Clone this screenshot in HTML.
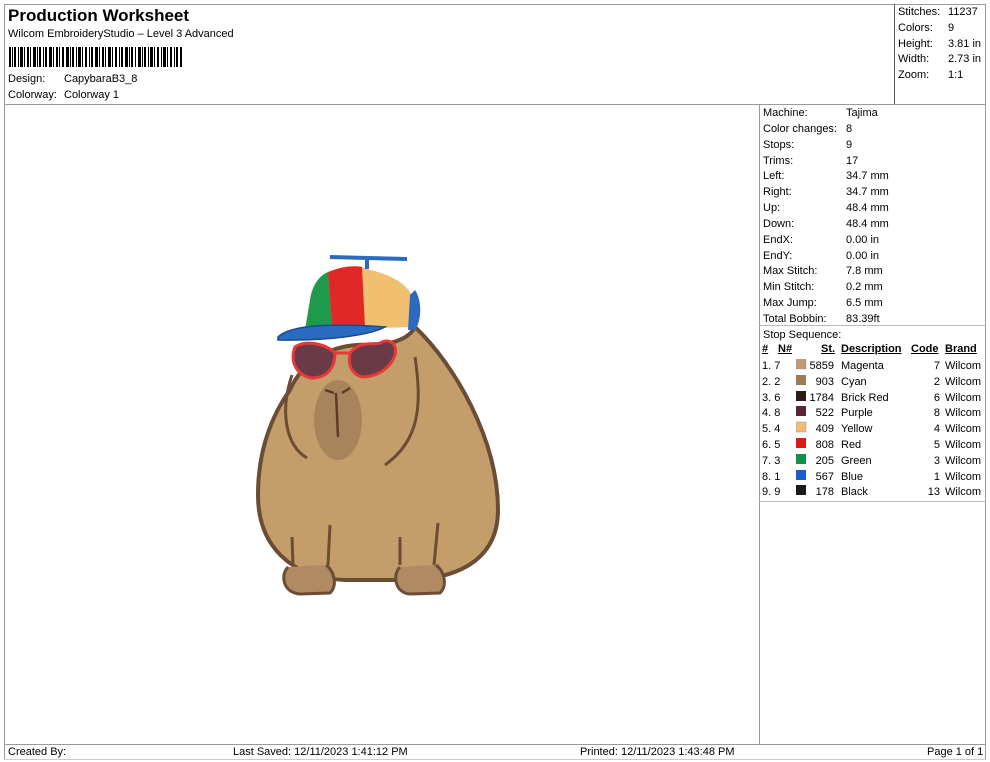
<!DOCTYPE html>
<html><head><meta charset="utf-8"><style>
body{margin:0;width:990px;height:762px;background:#fff;font-family:"Liberation Sans",Arial,sans-serif;font-size:11px;color:#000;position:relative;overflow:hidden}
.a{position:absolute;white-space:nowrap}
.l{position:absolute;background:#9a9a9a}
</style></head><body>
<div class="l" style="left:4px;top:4px;width:982px;height:1px"></div>
<div class="l" style="left:4px;top:4px;width:1px;height:756px"></div>
<div class="l" style="left:985px;top:4px;width:1px;height:756px"></div>
<div class="l" style="left:4px;top:104px;width:982px;height:1px"></div>
<div class="l" style="left:894px;top:4px;width:1px;height:100px;background:#555"></div>
<div class="l" style="left:759px;top:104px;width:1px;height:640px"></div>
<div class="l" style="left:759px;top:325px;width:227px;height:1px;background:#bbb"></div>
<div class="l" style="left:759px;top:501px;width:227px;height:1px;background:#bbb"></div>
<div class="l" style="left:4px;top:744px;width:982px;height:1px"></div>
<div class="l" style="left:4px;top:759px;width:982px;height:1px;background:#ccc"></div>

<div class="a" style="left:8px;top:6px;font-size:17px;font-weight:bold">Production Worksheet</div>
<div class="a" style="left:8px;top:28px">Wilcom EmbroideryStudio – Level 3 Advanced</div>
<svg class="a" style="left:9px;top:47px" width="174" height="20">
<g fill="#000">
<rect x="0" y="0" width="2" height="20"/><rect x="3" y="0" width="1" height="20"/><rect x="5" y="0" width="2" height="20"/><rect x="9" y="0" width="1" height="20"/><rect x="11" y="0" width="3" height="20"/><rect x="15" y="0" width="1" height="20"/><rect x="18" y="0" width="2" height="20"/><rect x="21" y="0" width="1" height="20"/><rect x="24" y="0" width="3" height="20"/><rect x="28" y="0" width="1" height="20"/><rect x="30" y="0" width="2" height="20"/><rect x="34" y="0" width="1" height="20"/><rect x="36" y="0" width="2" height="20"/><rect x="40" y="0" width="3" height="20"/><rect x="44" y="0" width="1" height="20"/><rect x="47" y="0" width="2" height="20"/><rect x="50" y="0" width="1" height="20"/><rect x="53" y="0" width="2" height="20"/><rect x="57" y="0" width="3" height="20"/><rect x="61" y="0" width="1" height="20"/><rect x="63" y="0" width="2" height="20"/><rect x="67" y="0" width="1" height="20"/><rect x="69" y="0" width="3" height="20"/><rect x="73" y="0" width="1" height="20"/><rect x="76" y="0" width="2" height="20"/><rect x="80" y="0" width="1" height="20"/><rect x="82" y="0" width="2" height="20"/><rect x="86" y="0" width="3" height="20"/><rect x="90" y="0" width="1" height="20"/><rect x="93" y="0" width="2" height="20"/><rect x="96" y="0" width="1" height="20"/><rect x="99" y="0" width="3" height="20"/><rect x="103" y="0" width="1" height="20"/><rect x="106" y="0" width="2" height="20"/><rect x="110" y="0" width="1" height="20"/><rect x="112" y="0" width="2" height="20"/><rect x="116" y="0" width="3" height="20"/><rect x="120" y="0" width="1" height="20"/><rect x="122" y="0" width="2" height="20"/><rect x="126" y="0" width="1" height="20"/><rect x="129" y="0" width="3" height="20"/><rect x="133" y="0" width="1" height="20"/><rect x="135" y="0" width="2" height="20"/><rect x="139" y="0" width="1" height="20"/><rect x="141" y="0" width="3" height="20"/><rect x="145" y="0" width="1" height="20"/><rect x="148" y="0" width="2" height="20"/><rect x="152" y="0" width="1" height="20"/><rect x="154" y="0" width="3" height="20"/><rect x="158" y="0" width="1" height="20"/><rect x="161" y="0" width="2" height="20"/><rect x="165" y="0" width="1" height="20"/><rect x="167" y="0" width="2" height="20"/><rect x="171" y="0" width="2" height="20"/>
</g></svg>
<div class="a" style="left:8px;top:73px">Design:</div><div class="a" style="left:64px;top:73px">CapybaraB3_8</div>
<div class="a" style="left:8px;top:89px">Colorway:</div><div class="a" style="left:64px;top:89px">Colorway 1</div>

<div class="a" style="left:898px;top:5px;line-height:15.8px">Stitches:<br>Colors:<br>Height:<br>Width:<br>Zoom:</div>
<div class="a" style="left:948px;top:5px;line-height:15.8px">11237<br>9<br>3.81 in<br>2.73 in<br>1:1</div>

<div class="a" style="left:763px;top:106px;line-height:15.85px">Machine:<br>Color changes:<br>Stops:<br>Trims:<br>Left:<br>Right:<br>Up:<br>Down:<br>EndX:<br>EndY:<br>Max Stitch:<br>Min Stitch:<br>Max Jump:<br>Total Bobbin:<br>Stop Sequence:</div>
<div class="a" style="left:846px;top:106px;line-height:15.85px">Tajima<br>8<br>9<br>17<br>34.7 mm<br>34.7 mm<br>48.4 mm<br>48.4 mm<br>0.00 in<br>0.00 in<br>7.8 mm<br>0.2 mm<br>6.5 mm<br>83.39ft</div>

<div class="a" style="left:762px;top:343px;font-weight:bold;text-decoration:underline">#</div>
<div class="a" style="left:778px;top:343px;font-weight:bold;text-decoration:underline">N#</div>
<div class="a" style="left:821px;top:343px;font-weight:bold;text-decoration:underline">St.</div>
<div class="a" style="left:841px;top:343px;font-weight:bold;text-decoration:underline">Description</div>
<div class="a" style="left:911px;top:343px;font-weight:bold;text-decoration:underline">Code</div>
<div class="a" style="left:945px;top:343px;font-weight:bold;text-decoration:underline">Brand</div>
<div class="a" style="left:762px;top:359px;line-height:15.8px">1. 7<br>2. 2<br>3. 6<br>4. 8<br>5. 4<br>6. 5<br>7. 3<br>8. 1<br>9. 9</div>
<div class="a" style="left:796px;top:359px;line-height:15.8px;width:38px;text-align:right">5859<br>903<br>1784<br>522<br>409<br>808<br>205<br>567<br>178</div>
<div class="a" style="left:841px;top:359px;line-height:15.8px">Magenta<br>Cyan<br>Brick Red<br>Purple<br>Yellow<br>Red<br>Green<br>Blue<br>Black</div>
<div class="a" style="left:910px;top:359px;line-height:15.8px;width:30px;text-align:right">7<br>2<br>6<br>8<br>4<br>5<br>3<br>1<br>13</div>
<div class="a" style="left:945px;top:359px;line-height:15.8px">Wilcom<br>Wilcom<br>Wilcom<br>Wilcom<br>Wilcom<br>Wilcom<br>Wilcom<br>Wilcom<br>Wilcom</div>
<svg class="a" style="left:796px;top:359px" width="12" height="140">
<rect x="0" y="0" width="10" height="10" fill="#c09a72" stroke="#999" stroke-width=".5"/>
<rect x="0" y="16" width="10" height="10" fill="#a07a58"/>
<rect x="0" y="32" width="10" height="10" fill="#2a1a1a"/>
<rect x="0" y="47" width="10" height="10" fill="#5a2438"/>
<rect x="0" y="63" width="10" height="10" fill="#f0bc78" stroke="#999" stroke-width=".5"/>
<rect x="0" y="79" width="10" height="10" fill="#e01818"/>
<rect x="0" y="95" width="10" height="10" fill="#10904a"/>
<rect x="0" y="111" width="10" height="10" fill="#1a5cc8"/>
<rect x="0" y="126" width="10" height="10" fill="#1a1a1a"/>
</svg>

<svg class="a" style="left:250px;top:245px" width="260" height="360" viewBox="0 0 260 360">
<path d="M40 145 C55 110 90 98 120 100 C145 100 160 92 165 82 C205 120 248 195 248 265 C248 310 215 333 160 335 L95 335 C40 333 8 300 8 250 C8 205 22 170 40 145 Z" fill="#c49e6a" stroke="#6b4c35" stroke-width="4"/>
<path d="M38 322 C30 330 33 348 50 349 L80 348 C88 340 84 326 76 320" fill="#b08a62" stroke="#6b4c35" stroke-width="3"/>
<path d="M150 322 C142 330 145 348 160 349 L190 348 C198 340 194 326 186 320" fill="#b08a62" stroke="#6b4c35" stroke-width="3"/>
<path d="M43 320 L42 292 M78 320 L80 280 M150 320 L150 292 M184 320 L188 278" stroke="#6b4c35" stroke-width="3" fill="none"/>
<path d="M42 130 C30 165 35 200 57 213 M165 112 C172 160 170 195 135 220" stroke="#6b4c35" stroke-width="3" fill="none"/>
<ellipse cx="88" cy="175" rx="24" ry="40" fill="#a8845c"/>
<path d="M86 148 L88 192 M75 145 L84 148 M92 148 L100 143" stroke="#5a3c28" stroke-width="2.5" fill="none"/>
<path d="M120 25 C95 15 70 25 60 55 L55 85 L165 82 C170 60 165 35 120 25Z" fill="#f0c070"/>
<path d="M60 55 C62 40 70 30 78 27 L82 82 L55 85 Z" fill="#1e9a4a"/>
<path d="M78 27 C90 22 105 20 112 22 L115 82 L82 82 Z" fill="#e02828"/>
<path d="M165 45 C172 55 172 75 165 85 L158 85 L160 50Z" fill="#2a6ac0"/>
<path d="M28 92 C40 80 80 78 135 82 C120 90 80 96 28 95Z" fill="#2a6ac0" stroke="#1a4a90" stroke-width="1.5"/>
<path d="M80 12 L157 14 M117 13 L117 24" stroke="#2a6ac0" stroke-width="4" fill="none"/>
<path d="M45 102 C55 95 75 98 85 108 C85 125 75 133 62 133 C45 130 40 115 45 102Z" fill="#6a3a48" stroke="#e83838" stroke-width="3"/>
<path d="M100 108 C110 95 125 100 130 98 C140 92 148 100 145 110 C140 125 125 132 112 132 C100 128 98 118 100 108Z" fill="#6a3a48" stroke="#e83838" stroke-width="3"/>
<path d="M85 108 L100 108" stroke="#e83838" stroke-width="3"/>
</svg>

<div class="a" style="left:8px;top:746px">Created By:</div>
<div class="a" style="left:233px;top:746px">Last Saved: 12/11/2023 1:41:12 PM</div>
<div class="a" style="left:580px;top:746px">Printed: 12/11/2023 1:43:48 PM</div>
<div class="a" style="left:927px;top:746px">Page 1 of 1</div>
</body></html>
